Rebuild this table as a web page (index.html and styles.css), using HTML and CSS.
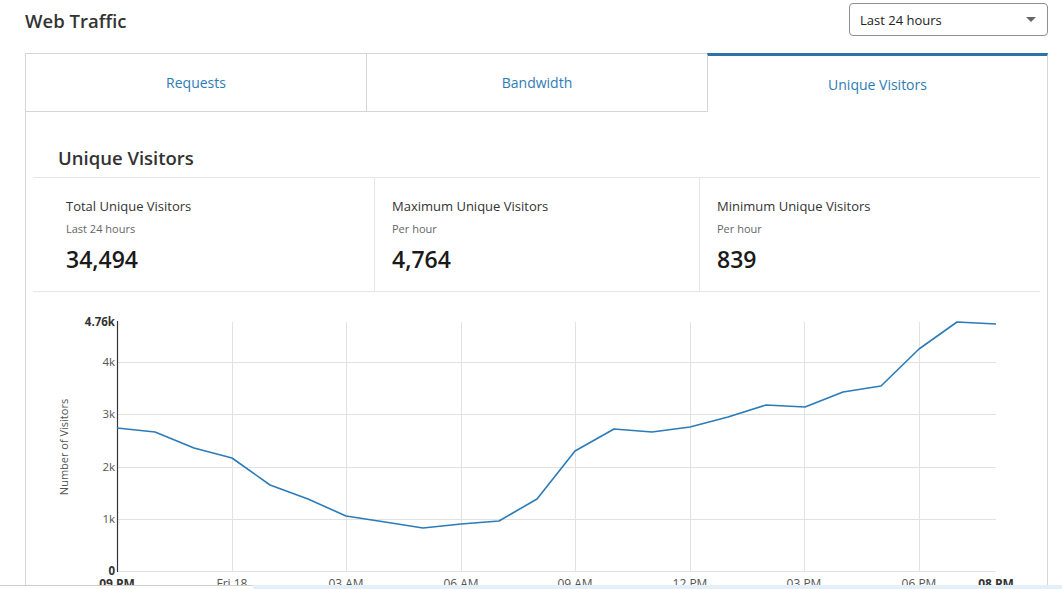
FILE: index.html
```html
<!DOCTYPE html>
<html lang="en">
<head>
<meta charset="utf-8">
<title>Web Traffic</title>
<link rel="stylesheet" href="styles.css">
</head>
<body>
<div class="page">
  <header class="header">
    <h1 class="title">Web Traffic</h1>
    <div class="select">
      <span>Last 24 hours</span>
      <span class="caret"></span>
    </div>
  </header>

  <nav class="tabs">
    <div class="tab">Requests</div>
    <div class="tab">Bandwidth</div>
    <div class="tab active">Unique Visitors</div>
  </nav>

  <section class="panel">
    <h2 class="panel-title">Unique Visitors</h2>
    <div class="stats">
      <div class="stat first">
        <div class="stat-label">Total Unique Visitors</div>
        <div class="stat-sub">Last 24 hours</div>
        <div class="stat-value">34,494</div>
      </div>
      <div class="stat mid">
        <div class="stat-label">Maximum Unique Visitors</div>
        <div class="stat-sub">Per hour</div>
        <div class="stat-value">4,764</div>
      </div>
      <div class="stat last">
        <div class="stat-label">Minimum Unique Visitors</div>
        <div class="stat-sub">Per hour</div>
        <div class="stat-value">839</div>
      </div>
    </div>

    <svg class="chart" width="1021" height="310" viewBox="26 292 1021 310">
      <g class="grid">
        <line x1="118" y1="362.5" x2="996" y2="362.5"/>
        <line x1="118" y1="414.5" x2="996" y2="414.5"/>
        <line x1="118" y1="467.5" x2="996" y2="467.5"/>
        <line x1="118" y1="519.5" x2="996" y2="519.5"/>
        <line x1="118" y1="571.5" x2="996" y2="571.5"/>
        <line x1="232.5" y1="322" x2="232.5" y2="572"/>
        <line x1="346.5" y1="322" x2="346.5" y2="572"/>
        <line x1="461.5" y1="322" x2="461.5" y2="572"/>
        <line x1="575.5" y1="322" x2="575.5" y2="572"/>
        <line x1="690.5" y1="322" x2="690.5" y2="572"/>
        <line x1="804.5" y1="322" x2="804.5" y2="572"/>
        <line x1="919.5" y1="322" x2="919.5" y2="572"/>
      </g>
      <line class="axis" x1="117.5" y1="321" x2="117.5" y2="572"/>
      <g class="ylabels">
        <text class="strong" x="115" y="326">4.76k</text>
        <text x="115" y="366">4k</text>
        <text x="115" y="418">3k</text>
        <text x="115" y="471">2k</text>
        <text x="115" y="523">1k</text>
        <text class="strong" x="115" y="575">0</text>
      </g>
      <text class="ytitle" transform="translate(68 447) rotate(-90)">Number of Visitors</text>
      <g class="xlabels">
        <text class="strong" x="117" y="588">09 PM</text>
        <text x="232" y="588">Fri 18</text>
        <text x="346" y="588">03 AM</text>
        <text x="461" y="588">06 AM</text>
        <text x="575" y="588">09 AM</text>
        <text x="690" y="588">12 PM</text>
        <text x="804" y="588">03 PM</text>
        <text x="919" y="588">06 PM</text>
        <text class="strong" x="996" y="588">08 PM</text>
      </g>
      <polyline class="series" points="117,428 155,432 194,448 232,458 270,485 308,499 346,516 385,522 423,528 461,524 499,521 537,499 575,451 614,429 652,432 690,427 728,417 766,405 805,407 843,392 881,386 919,349 957,322 996,324"/>
    </svg>
  </section>
</div>
<div class="bottom-strip">
  <div class="strip-left"></div>
  <div class="strip-right"></div>
</div>
</body>
</html>
```

FILE: styles.css
```css
html, body {
  margin: 0;
  padding: 0;
  background: #ffffff;
  overflow: hidden;
}

body {
  font-family: "Open Sans", "Noto Sans", "Liberation Sans", sans-serif;
  color: #333333;
}

.page {
  width: 1023px;
  margin-left: 25px;
}

.header {
  height: 53px;
  box-sizing: border-box;
  padding-top: 3px;
  display: flex;
  justify-content: space-between;
  align-items: flex-start;
}

.title {
  margin: 0;
  font-size: 18.5px;
  font-weight: 600;
  line-height: 35px;
  color: #333333;
}

.select {
  width: 199px;
  height: 33px;
  box-sizing: border-box;
  border: 1px solid #8f8f8f;
  border-radius: 4px;
  display: flex;
  align-items: center;
  justify-content: space-between;
  padding: 0 10px 0 10px;
  font-size: 13px;
  color: #222222;
}

.caret {
  width: 0;
  height: 0;
  border-left: 5px solid transparent;
  border-right: 5px solid transparent;
  border-top: 5px solid #666666;
  margin-right: 1px;
}

.tabs {
  display: grid;
  grid-template-columns: 341px 341px 341px;
  height: 59px;
}

.tab {
  box-sizing: border-box;
  border-top: 1px solid #d5d5d5;
  border-bottom: 1px solid #d5d5d5;
  border-left: 1px solid #d5d5d5;
  display: flex;
  align-items: center;
  justify-content: center;
  font-size: 14px;
  color: #2e7cb5;
  padding-bottom: 1px;
}

.tab.active {
  border-top: 3px solid #2b73a8;
  border-bottom: none;
  border-right: 1px solid #d5d5d5;
  padding-top: 1px;
  padding-bottom: 0;
}

.panel {
  border-left: 1px solid #d5d5d5;
  border-right: 1px solid #d5d5d5;
  height: 520px;
}

.panel-title {
  margin: 0;
  padding: 33px 0 6px 32px;
  font-size: 18.5px;
  font-weight: 600;
  line-height: 26px;
  color: #333333;
}

.stats {
  margin: 0 7px 0 7px;
  border-top: 1px solid #e6e6e6;
  border-bottom: 1px solid #e6e6e6;
  display: grid;
  grid-template-columns: 341px 325px 1fr;
  height: 115px;
  box-sizing: border-box;
}

.stat {
  padding-top: 19px;
  padding-left: 17px;
}

.stat.first {
  padding-left: 33px;
}

.stat.mid,
.stat.last {
  border-left: 1px solid #e6e6e6;
}

.stat-label {
  font-size: 13px;
  line-height: 18px;
  color: #333333;
}

.stat-sub {
  margin-top: 6px;
  font-size: 11px;
  line-height: 16px;
  color: #666666;
}

.stat-value {
  margin-top: 7px;
  font-size: 23px;
  line-height: 30px;
  font-weight: 600;
  color: #1a1a1a;
}

.chart {
  display: block;
  overflow: visible;
}

.grid line {
  stroke: #e2e2e2;
  stroke-width: 1;
}

.axis {
  stroke: #333333;
  stroke-width: 1.2;
}

.ylabels text {
  text-anchor: end;
  font-size: 11.5px;
  fill: #555555;
}

.xlabels text {
  text-anchor: middle;
  font-size: 12px;
  fill: #555555;
}

.chart text.strong {
  font-weight: 700;
  fill: #333333;
}

.ytitle {
  text-anchor: middle;
  font-size: 11px;
  fill: #555555;
}

.series {
  fill: none;
  stroke: #2b7bb9;
  stroke-width: 1.6;
  stroke-linejoin: round;
}

.bottom-strip {
  position: fixed;
  left: 0;
  right: 0;
  bottom: 0;
  height: 4px;
  display: flex;
  align-items: flex-start;
}

.strip-left {
  width: 253px;
  height: 4px;
  border-top: 1px solid #cfcfcf;
  background: #ffffff;
}

.strip-right {
  flex: 1;
  height: 4px;
  background: #e4eff7;
}
```
